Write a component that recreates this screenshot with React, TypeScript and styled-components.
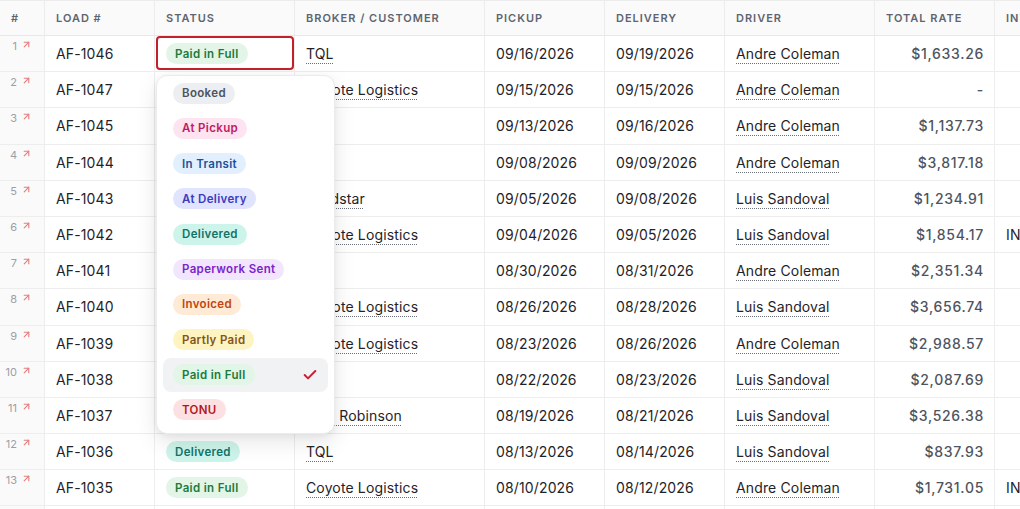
import styled, { createGlobalStyle, css } from "styled-components";
import { ArrowUpRight, Check } from "lucide-react";

const GlobalStyle = createGlobalStyle`
  html, body { margin: 0; padding: 0; background: #fff; overflow: hidden; }
  body { font-family: Inter, "Noto Sans", "Liberation Sans", sans-serif; color: #1f2328; }
`;

type Status =
  | "Booked"
  | "At Pickup"
  | "In Transit"
  | "At Delivery"
  | "Delivered"
  | "Paperwork Sent"
  | "Invoiced"
  | "Partly Paid"
  | "Paid in Full"
  | "TONU";

const statusColors: Record<Status, { bg: string; fg: string }> = {
  Booked: { bg: "#eceef1", fg: "#4b5260" },
  "At Pickup": { bg: "#fde4f0", fg: "#c01c63" },
  "In Transit": { bg: "#e2efff", fg: "#1f4f96" },
  "At Delivery": { bg: "#e1e4ff", fg: "#3b3bbf" },
  Delivered: { bg: "#cdf4ea", fg: "#11736a" },
  "Paperwork Sent": { bg: "#f2e6ff", fg: "#7b24c9" },
  Invoiced: { bg: "#ffead5", fg: "#c2440f" },
  "Partly Paid": { bg: "#fdf4c2", fg: "#86531a" },
  "Paid in Full": { bg: "#e2f5e7", fg: "#1b7b3c" },
  TONU: { bg: "#fde1e2", fg: "#b3161e" },
};

const allStatuses = Object.keys(statusColors) as Status[];

const columns = [
  { key: "num", label: "#", width: 45 },
  { key: "load", label: "Load #", width: 110 },
  { key: "status", label: "Status", width: 140 },
  { key: "broker", label: "Broker / Customer", width: 190 },
  { key: "pickup", label: "Pickup", width: 120 },
  { key: "delivery", label: "Delivery", width: 120 },
  { key: "driver", label: "Driver", width: 150 },
  { key: "rate", label: "Total Rate", width: 120 },
  { key: "invoice", label: "Invoice #", width: 120 },
];

const gridCols = columns.map((c) => `${c.width}px`).join(" ");

type Load = {
  load: string;
  status: Status;
  broker: string;
  pickup: string;
  delivery: string;
  driver: string;
  rate: string;
  invoice: string;
};

const loads: Load[] = [
  { load: "AF-1046", status: "Paid in Full", broker: "TQL", pickup: "09/16/2026", delivery: "09/19/2026", driver: "Andre Coleman", rate: "$1,633.26", invoice: "" },
  { load: "AF-1047", status: "Booked", broker: "Coyote Logistics", pickup: "09/15/2026", delivery: "09/15/2026", driver: "Andre Coleman", rate: "-", invoice: "" },
  { load: "AF-1045", status: "In Transit", broker: "TQL", pickup: "09/13/2026", delivery: "09/16/2026", driver: "Andre Coleman", rate: "$1,137.73", invoice: "" },
  { load: "AF-1044", status: "At Pickup", broker: "TQL", pickup: "09/08/2026", delivery: "09/09/2026", driver: "Andre Coleman", rate: "$3,817.18", invoice: "" },
  { load: "AF-1043", status: "Delivered", broker: "Landstar", pickup: "09/05/2026", delivery: "09/08/2026", driver: "Luis Sandoval", rate: "$1,234.91", invoice: "" },
  { load: "AF-1042", status: "Invoiced", broker: "Coyote Logistics", pickup: "09/04/2026", delivery: "09/05/2026", driver: "Luis Sandoval", rate: "$1,854.17", invoice: "INV-1042" },
  { load: "AF-1041", status: "Delivered", broker: "TQL", pickup: "08/30/2026", delivery: "08/31/2026", driver: "Andre Coleman", rate: "$2,351.34", invoice: "" },
  { load: "AF-1040", status: "Delivered", broker: "Coyote Logistics", pickup: "08/26/2026", delivery: "08/28/2026", driver: "Luis Sandoval", rate: "$3,656.74", invoice: "" },
  { load: "AF-1039", status: "Delivered", broker: "Coyote Logistics", pickup: "08/23/2026", delivery: "08/26/2026", driver: "Andre Coleman", rate: "$2,988.57", invoice: "" },
  { load: "AF-1038", status: "Delivered", broker: "TQL", pickup: "08/22/2026", delivery: "08/23/2026", driver: "Luis Sandoval", rate: "$2,087.69", invoice: "" },
  { load: "AF-1037", status: "Delivered", broker: "C.H. Robinson", pickup: "08/19/2026", delivery: "08/21/2026", driver: "Luis Sandoval", rate: "$3,526.38", invoice: "" },
  { load: "AF-1036", status: "Delivered", broker: "TQL", pickup: "08/13/2026", delivery: "08/14/2026", driver: "Luis Sandoval", rate: "$837.93", invoice: "" },
  { load: "AF-1035", status: "Paid in Full", broker: "Coyote Logistics", pickup: "08/10/2026", delivery: "08/12/2026", driver: "Andre Coleman", rate: "$1,731.05", invoice: "INV-1035" },
  { load: "AF-1034", status: "Paid in Full", broker: "TQL", pickup: "08/06/2026", delivery: "08/08/2026", driver: "Luis Sandoval", rate: "$2,104.50", invoice: "" },
];

const Sheet = styled.div`
  width: max-content;
  position: relative;
`;

const HeaderRow = styled.div`
  display: grid;
  grid-template-columns: ${gridCols};
  height: 36px;
  box-sizing: border-box;
  background: #fafafa;
  border-top: 1px solid #ececec;
  border-bottom: 1px solid #e8e8e8;
`;

const HeaderCell = styled.div`
  display: flex;
  align-items: center;
  padding: 0 11px;
  border-right: 1px solid #ececec;
  font-size: 11px;
  font-weight: 600;
  letter-spacing: 0.09em;
  text-transform: uppercase;
  color: #5f6570;
  white-space: nowrap;
  overflow: hidden;
`;

const Row = styled.div`
  display: grid;
  grid-template-columns: ${gridCols};
  height: 36.2px;
  box-sizing: border-box;
  border-bottom: 1px solid #ededed;
`;

const Cell = styled.div<{ $align?: "left" | "right"; $selected?: boolean }>`
  position: relative;
  display: flex;
  align-items: center;
  justify-content: ${(p) => (p.$align === "right" ? "flex-end" : "flex-start")};
  padding: 0 ${(p) => (p.$align === "right" ? "10px" : "11px")};
  border-right: 1px solid #ededed;
  font-size: 14px;
  letter-spacing: 0.01em;
  color: #1f2328;
  white-space: nowrap;
  ${(p) =>
    p.$selected &&
    css`
      z-index: 5;
      &::after {
        content: "";
        position: absolute;
        left: 1px;
        right: 0;
        top: 0;
        bottom: 1px;
        border: 2px solid #c3202b;
        border-radius: 4px;
        pointer-events: none;
      }
    `}
`;

const NumCell = styled.div`
  display: flex;
  align-items: flex-start;
  justify-content: flex-end;
  gap: 4px;
  padding: 3px 12px 0 0;
  background: #fafafa;
  border-right: 1px solid #ededed;
  font-size: 11px;
  line-height: 14px;
  color: #9a9fa8;
  svg {
    margin-top: 0;
    color: #e27d7b;
  }
`;

const Linked = styled.span`
  text-decoration: underline dotted #6b7078;
  text-underline-offset: 4px;
  text-decoration-thickness: 1px;
`;

const Rate = styled.span`
  color: #4e545e;
  font-weight: 500;
  letter-spacing: 0.05em;
`;

const Badge = styled.span<{ $status: Status }>`
  display: inline-flex;
  align-items: center;
  height: 21px;
  padding: 0 9px;
  border-radius: 11px;
  font-size: 11.5px;
  font-weight: 600;
  letter-spacing: 0.03em;
  background: ${(p) => statusColors[p.$status].bg};
  color: ${(p) => statusColors[p.$status].fg};
`;

const Menu = styled.div`
  position: absolute;
  top: calc(100% + 4px);
  left: 1px;
  width: 179px;
  box-sizing: border-box;
  padding: 0 6px 6px;
  background: #fff;
  border-radius: 11px;
  border: 1px solid #ebebeb;
  box-shadow: 0 8px 22px rgba(0, 0, 0, 0.1), 0 2px 6px rgba(0, 0, 0, 0.05);
  display: flex;
  flex-direction: column;
  gap: 1px;
  z-index: 20;
`;

const MenuItem = styled.div<{ $active?: boolean }>`
  display: flex;
  align-items: center;
  justify-content: space-between;
  height: 34.2px;
  padding: 0 10px 0 10px;
  border-radius: 8px;
  background: ${(p) => (p.$active ? "#f1f2f3" : "transparent")};
  svg {
    color: #cc1f36;
  }
`;

const StatusMenu = ({ current }: { current: Status }) => (
  <Menu>
    {allStatuses.map((s) => (
      <MenuItem key={s} $active={s === current}>
        <Badge $status={s}>{s}</Badge>
        {s === current && <Check size={16} strokeWidth={3} />}
      </MenuItem>
    ))}
  </Menu>
);

export default function App() {
  return (
    <>
      <GlobalStyle />
      <Sheet>
        <HeaderRow>
          {columns.map((c) => (
            <HeaderCell key={c.key}>{c.label}</HeaderCell>
          ))}
        </HeaderRow>
        {loads.map((l, i) => (
          <Row key={l.load}>
            <NumCell>
              {i + 1}
              <ArrowUpRight size={11} strokeWidth={2.4} />
            </NumCell>
            <Cell>{l.load}</Cell>
            <Cell $selected={i === 0}>
              <Badge $status={l.status}>{l.status}</Badge>
              {i === 0 && <StatusMenu current={l.status} />}
            </Cell>
            <Cell>
              <Linked>{l.broker}</Linked>
            </Cell>
            <Cell>{l.pickup}</Cell>
            <Cell>{l.delivery}</Cell>
            <Cell>
              <Linked>{l.driver}</Linked>
            </Cell>
            <Cell $align="right">
              <Rate>{l.rate}</Rate>
            </Cell>
            <Cell>{l.invoice}</Cell>
          </Row>
        ))}
      </Sheet>
    </>
  );
}
